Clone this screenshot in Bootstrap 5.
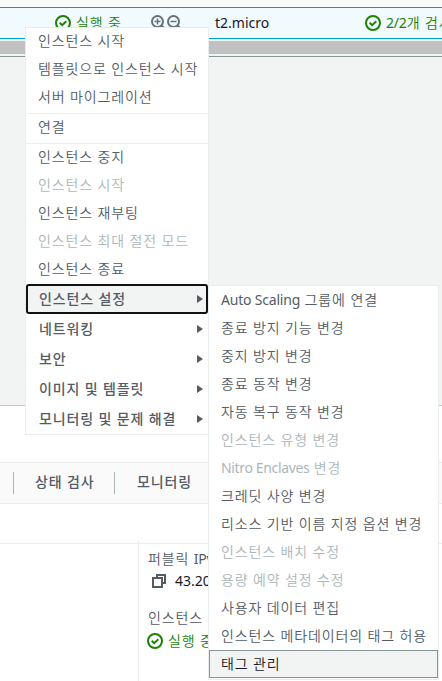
<!DOCTYPE html>
<html lang="ko">
<head>
<meta charset="utf-8">
<meta name="viewport" content="width=device-width, initial-scale=1">
<title>EC2 인스턴스</title>
<link href="https://cdn.jsdelivr.net/npm/bootstrap@5.3.0/dist/css/bootstrap.min.css" rel="stylesheet">
<style>
  body { font-family: "Noto Sans", "Noto Sans CJK KR", sans-serif; font-size: 14px; line-height: 20px; color: #16191f; width: 442px; height: 681px; letter-spacing: 0; }
  .ko { letter-spacing: .87px; }
  .latin { letter-spacing: -.2px; font-weight: 400; }
  .latin-wide { letter-spacing: -.35px; font-weight: 400; }
  .green { color: #1d8102; font-weight: 350; }
  .slate { color: #545b64; font-weight: 350; }
  /* instance table row and splitter */
  .strip-top { height: 7px; background: #fafafa; }
  .sel-row { height: 32px; background: #f1faff; border-top: 1px solid #00a1c9; border-bottom: 1px solid #00a1c9; padding-left: 55px; }
  .row-state { width: 76px; padding: 5px 0 0 5px; }
  .row-zoom { margin: 7px 33px 0 0; }
  .row-type { width: 150px; padding-top: 5px; }
  .row-check { padding: 5px 0 0 5px; }
  .row-ok { margin-top: 7px; }
  .scroll-gap { height: 17px; background: #c1c1c1; border-top: 2px solid #f2f3f3; border-bottom: 2px solid #f2f3f3; }
  .split-area { height: 350px; background: #f2f3f3; border-top: 1px solid #879596; border-bottom: 1px solid #c3c8c8; }
  /* details panel */
  .tab-strip { height: 42px; margin-top: 56px; background: #fafafa; border-top: 1px solid #eaeded; border-bottom: 1px solid #eaeded; padding-left: 13px; }
  .tab-item { height: 22px; border-left: 1px solid #aab7b8; line-height: 20px; font-weight: 500; padding-left: 21px; }
  .tab-item + .tab-item { padding-left: 22px; }
  .tab-first { width: 101px; }
  .detail-top { height: 39px; }
  .detail-rule { border-top: 1px solid #eaeded; }
  .detail-col { margin-left: 138px; margin-top: -4px; height: 142px; border-left: 1px solid #eaeded; padding: 9px 0 0 9px; }
  .copy-line { padding-left: 4px; gap: 9px; height: 20px; margin-top: 2px; }
  .state-label { margin-top: 17px; }
  .state-line { gap: 5px; height: 20px; margin: 3px 0 0 -1px; }
  /* menus */
  .menu-main { left: 25px; top: 27px; width: 184px; height: 408px; background: #fff; border: 1px solid #eaeded; z-index: 2; }
  .menu-sub { left: 208px; top: 285px; width: 231px; height: 395px; background: #fff; border: 1px solid #eaeded; z-index: 3; }
  .mi { height: 28px; line-height: 27px; padding-left: 12px; color: #545b64; font-weight: 350; white-space: nowrap; }
  .menu-main .mi { line-height: 26px; }
  .mi.off { color: #aab7b8; }
  .rule { border-top: 1px solid #eaeded; margin-top: 1px; }
  .grp { height: 30px; padding: 0 5px 0 13px; color: #545b64; font-weight: 500; }
  .grp.open { background: #f2f3f3; outline: 2px solid #111; outline-offset: -2px; border-radius: 3px; }
  .arrow { width: 6px; height: 8px; fill: #545b64; }
  .mi.hot { background: #f2f3f3; border: 1px solid #879596; color: #16191f; line-height: 25px; padding-left: 11px; }
</style>
</head>
<body class="bg-white position-relative overflow-hidden m-0">
<svg class="d-none" xmlns="http://www.w3.org/2000/svg">
  <symbol id="ok" viewBox="0 0 16 16"><circle cx="8" cy="8" r="7" fill="none" stroke="#1d8102" stroke-width="2"/><path d="M4.700 7.700l2.500 2.400 4.100-3.900" fill="none" stroke="#1d8102" stroke-width="2"/></symbol>
  <symbol id="arr" viewBox="0 0 6 8"><path d="M0 0v8l6-4z"/></symbol>
</svg>

<div class="strip-top"></div>
<div class="sel-row d-flex overflow-hidden">
  <svg width="16" height="16" class="row-ok flex-shrink-0"><use href="#ok"/></svg>
  <span class="ko green row-state flex-shrink-0 text-nowrap">실행 중</span>
  <span class="row-zoom flex-shrink-0 d-flex ps-1">
    <svg width="31" height="15" viewBox="0 0 31 15" fill="none" stroke="#687078"><g stroke-width="2"><circle cx="6.500" cy="6.500" r="5.500"/><path d="M10.500 10.500l3.500 3.500"/><circle cx="22.500" cy="6.500" r="5.500"/><path d="M26.500 10.500l3.500 3.500"/></g><path d="M3.500 6.500h6M6.500 3.500v6M19.500 6.500h6" stroke-width="1.500"/></svg>
  </span>
  <span class="row-type flex-shrink-0">t2.micro</span>
  <svg width="16" height="16" class="row-ok flex-shrink-0"><use href="#ok"/></svg>
  <span class="ko green text-nowrap row-check"><span class="latin">2/2</span>개 검사</span>
</div>
<div class="scroll-gap"></div>
<div class="split-area"></div>
<div class="tab-strip d-flex align-items-center slate ko">
  <div class="tab-item tab-first">상태 검사</div>
  <div class="tab-item">모니터링</div>
</div>
<div class="detail-top"></div>
<div class="detail-rule"></div>
<div class="detail-col">
  <div class="slate ko">퍼블릭 <span class="latin">IPv4</span></div>
  <div class="d-flex align-items-center copy-line">
    <svg width="14" height="14" viewBox="0 0 14 14" fill="none" stroke="#545b64" stroke-width="2"><path d="M1 4h9v9H1z"/><path d="M5 4V1h8v8h-3"/></svg>
    <span>43.20</span>
  </div>
  <div class="slate ko state-label">인스턴스</div>
  <div class="d-flex align-items-center state-line"><svg width="16" height="16"><use href="#ok"/></svg><span class="ko green">실행 중</span></div>
</div>

<div class="menu-main position-absolute ko">
  <div class="mi">인스턴스 시작</div>
  <div class="mi">템플릿으로 인스턴스 시작</div>
  <div class="mi">서버 마이그레이션</div>
  <div class="rule"></div>
  <div class="mi">연결</div>
  <div class="rule"></div>
  <div class="mi">인스턴스 중지</div>
  <div class="mi off">인스턴스 시작</div>
  <div class="mi">인스턴스 재부팅</div>
  <div class="mi off">인스턴스 최대 절전 모드</div>
  <div class="mi">인스턴스 종료</div>
  <div class="grp open d-flex justify-content-between align-items-center">인스턴스 설정<svg class="arrow"><use href="#arr"/></svg></div>
  <div class="grp d-flex justify-content-between align-items-center">네트워킹<svg class="arrow"><use href="#arr"/></svg></div>
  <div class="grp d-flex justify-content-between align-items-center">보안<svg class="arrow"><use href="#arr"/></svg></div>
  <div class="grp d-flex justify-content-between align-items-center">이미지 및 템플릿<svg class="arrow"><use href="#arr"/></svg></div>
  <div class="grp d-flex justify-content-between align-items-center">모니터링 및 문제 해결<svg class="arrow"><use href="#arr"/></svg></div>
</div>

<div class="menu-sub position-absolute ko">
  <div class="mi"><span class="latin">Auto Scaling</span> 그룹에 연결</div>
  <div class="mi">종료 방지 기능 변경</div>
  <div class="mi">중지 방지 변경</div>
  <div class="mi">종료 동작 변경</div>
  <div class="mi">자동 복구 동작 변경</div>
  <div class="mi off">인스턴스 유형 변경</div>
  <div class="mi off"><span class="latin-wide">Nitro Enclaves</span> 변경</div>
  <div class="mi">크레딧 사양 변경</div>
  <div class="mi">리소스 기반 이름 지정 옵션 변경</div>
  <div class="mi off">인스턴스 배치 수정</div>
  <div class="mi off">용량 예약 설정 수정</div>
  <div class="mi">사용자 데이터 편집</div>
  <div class="mi">인스턴스 메타데이터의 태그 허용</div>
  <div class="mi hot">태그 관리</div>
</div>
<script src="https://cdn.jsdelivr.net/npm/bootstrap@5.3.0/dist/js/bootstrap.bundle.min.js"></script>
</body>
</html>
